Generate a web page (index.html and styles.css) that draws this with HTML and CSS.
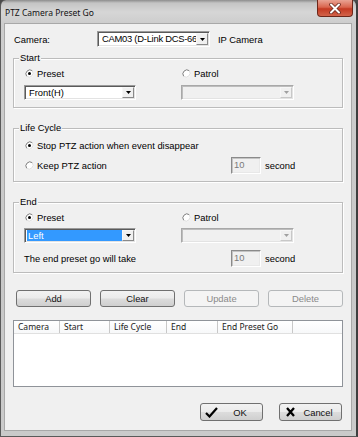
FILE: index.html
```html
<!DOCTYPE html>
<html>
<head>
<meta charset="utf-8">
<title>PTZ Camera Preset Go</title>
<link rel="stylesheet" href="styles.css">
</head>
<body>
<div class="window">
  <div class="titlebar">
    <span class="title">PTZ Camera Preset Go</span>
    <div class="close">
      <svg width="14" height="11" viewBox="0 0 14 11"><path d="M3 1.5 L11 9.5 M11 1.5 L3 9.5" stroke="#6a2a20" stroke-width="3.6" stroke-linecap="round"/><path d="M3 1.5 L11 9.5 M11 1.5 L3 9.5" stroke="#fff" stroke-width="2" stroke-linecap="round"/></svg>
    </div>
  </div>
  <div class="client">
    <div class="camera-row">
      <span class="cam-label">Camera:</span>
      <div class="combo cam-combo">
        <span class="combo-text cam-text">CAM03 (D-Link DCS-66</span>
        <span class="drop"><svg width="5" height="3" viewBox="0 0 5 3"><polygon points="0,0 5,0 2.5,3" fill="#000"/></svg></span>
      </div>
      <span class="cam-type">IP Camera</span>
    </div>

    <div class="group g-start">
      <span class="legend">Start</span>
      <div class="gcols">
        <div class="radio-row"><svg class="radio" width="9" height="9" viewBox="0 0 9 9"><circle cx="4.5" cy="4.5" r="4" fill="#fff"/><path d="M1.7 7.3 A4 4 0 0 1 7.3 1.7" fill="none" stroke="#7a7a7a" stroke-width="1"/><path d="M7.3 1.7 A4 4 0 0 1 1.7 7.3" fill="none" stroke="#dcdcdc" stroke-width="1"/><circle cx="4.5" cy="4.5" r="1.5" fill="#000"/></svg><span>Preset</span></div>
        <div class="radio-row"><svg class="radio" width="9" height="9" viewBox="0 0 9 9"><circle cx="4.5" cy="4.5" r="4" fill="#fff"/><path d="M1.7 7.3 A4 4 0 0 1 7.3 1.7" fill="none" stroke="#7a7a7a" stroke-width="1"/><path d="M7.3 1.7 A4 4 0 0 1 1.7 7.3" fill="none" stroke="#dcdcdc" stroke-width="1"/></svg><span>Patrol</span></div>
        <div class="combo w112">
          <span class="combo-text">Front(H)</span>
          <span class="drop"><svg width="5" height="3" viewBox="0 0 5 3"><polygon points="0,0 5,0 2.5,3" fill="#000"/></svg></span>
        </div>
        <div class="combo disabled w113">
          <span class="combo-text"></span>
          <span class="drop"><svg width="5" height="3" viewBox="0 0 5 3"><polygon points="0,0 5,0 2.5,3" fill="#a0a0a0"/></svg></span>
        </div>
      </div>
    </div>

    <div class="group g-life">
      <span class="legend">Life Cycle</span>
      <div class="radio-row"><svg class="radio" width="9" height="9" viewBox="0 0 9 9"><circle cx="4.5" cy="4.5" r="4" fill="#fff"/><path d="M1.7 7.3 A4 4 0 0 1 7.3 1.7" fill="none" stroke="#7a7a7a" stroke-width="1"/><path d="M7.3 1.7 A4 4 0 0 1 1.7 7.3" fill="none" stroke="#dcdcdc" stroke-width="1"/><circle cx="4.5" cy="4.5" r="1.5" fill="#000"/></svg><span>Stop PTZ action when event disappear</span></div>
      <div class="tb-row">
        <div class="radio-row"><svg class="radio" width="9" height="9" viewBox="0 0 9 9"><circle cx="4.5" cy="4.5" r="4" fill="#fff"/><path d="M1.7 7.3 A4 4 0 0 1 7.3 1.7" fill="none" stroke="#7a7a7a" stroke-width="1"/><path d="M7.3 1.7 A4 4 0 0 1 1.7 7.3" fill="none" stroke="#dcdcdc" stroke-width="1"/></svg><span>Keep PTZ action</span></div>
        <div class="tbox">10</div>
        <span class="unit">second</span>
      </div>
    </div>

    <div class="group g-end">
      <span class="legend">End</span>
      <div class="gcols end-cols">
        <div class="radio-row"><svg class="radio" width="9" height="9" viewBox="0 0 9 9"><circle cx="4.5" cy="4.5" r="4" fill="#fff"/><path d="M1.7 7.3 A4 4 0 0 1 7.3 1.7" fill="none" stroke="#7a7a7a" stroke-width="1"/><path d="M7.3 1.7 A4 4 0 0 1 1.7 7.3" fill="none" stroke="#dcdcdc" stroke-width="1"/><circle cx="4.5" cy="4.5" r="1.5" fill="#000"/></svg><span>Preset</span></div>
        <div class="radio-row"><svg class="radio" width="9" height="9" viewBox="0 0 9 9"><circle cx="4.5" cy="4.5" r="4" fill="#fff"/><path d="M1.7 7.3 A4 4 0 0 1 7.3 1.7" fill="none" stroke="#7a7a7a" stroke-width="1"/><path d="M7.3 1.7 A4 4 0 0 1 1.7 7.3" fill="none" stroke="#dcdcdc" stroke-width="1"/></svg><span>Patrol</span></div>
        <div class="combo focused w112">
          <span class="combo-text selected">Left</span>
          <span class="drop"><svg width="5" height="3" viewBox="0 0 5 3"><polygon points="0,0 5,0 2.5,3" fill="#000"/></svg></span>
        </div>
        <div class="combo disabled w113">
          <span class="combo-text"></span>
          <span class="drop"><svg width="5" height="3" viewBox="0 0 5 3"><polygon points="0,0 5,0 2.5,3" fill="#a0a0a0"/></svg></span>
        </div>
        <div class="tb-row span-all">
          <span>The end preset go will take</span>
          <div class="tbox">10</div>
          <span class="unit">second</span>
        </div>
      </div>
    </div>

    <div class="btn-row">
      <div class="btn">Add</div>
      <div class="btn">Clear</div>
      <div class="btn disabled">Update</div>
      <div class="btn disabled">Delete</div>
    </div>

    <div class="list">
      <div class="list-head">
        <span class="hcell c1">Camera</span>
        <span class="hcell c2">Start</span>
        <span class="hcell c3">Life Cycle</span>
        <span class="hcell c4">End</span>
        <span class="hcell c5">End Preset Go</span>
      </div>
    </div>

    <div class="footer">
      <div class="btn btn-icon ok">
        <svg width="13" height="11" viewBox="0 0 13 11"><path d="M1 6 L4.5 9.5 L12 1" fill="none" stroke="#000" stroke-width="2.2" stroke-linejoin="miter"/></svg>
        <span class="btn-label">OK</span>
      </div>
      <div class="btn btn-icon cancel">
        <svg width="9" height="10" viewBox="0 0 9 10"><path d="M1 1 L8 9 M8 1 L1 9" fill="none" stroke="#000" stroke-width="2.3"/></svg>
        <span class="btn-label">Cancel</span>
      </div>
    </div>
  </div>
</div>
</body>
</html>
```

FILE: styles.css
```css
* { box-sizing: border-box; }
html, body { margin: 0; padding: 0; }
body {
  width: 358px;
  height: 437px;
  overflow: hidden;
  background: #4a4a4a;
  font-family: "Liberation Sans", Arial, sans-serif;
  font-size: 9.4px;
  color: #000;
}

.window {
  width: 358px;
  height: 437px;
  display: flex;
  flex-direction: column;
  padding: 0 4px 5px 3px;
  border-left: 1px solid #5a5a5a;
  border-right: 2px solid #3e3e3e;
  border-bottom: 1px solid #5a5a5a;
  border-radius: 6px 6px 0 0;
  background: linear-gradient(180deg, #8c8c8c 0, #c4c4c4 3px, #d6d6d6 12px, #cdcdcd 23px, #c8c8c8 60%, #cacaca 100%);
}

.titlebar {
  height: 23px;
  flex: none;
  display: flex;
  align-items: flex-start;
}
.title {
  font-family: "Noto Sans", "Open Sans", sans-serif;
  font-size: 8.5px;
  line-height: 12px;
  margin: 7px 0 0 1px;
  color: #111;
}
.close {
  margin-left: auto;
  margin-right: -1px;
  width: 36px;
  height: 17px;
  display: flex;
  align-items: center;
  justify-content: center;
  border: 1px solid #6d2619;
  border-top: none;
  border-radius: 0 0 4px 4px;
  background: linear-gradient(180deg, #e9a393 0, #d9654e 45%, #c43a22 55%, #d2634a 100%);
}

.client {
  flex: 1;
  background: #f0f0f0;
  border: 1px solid #a8a8a8;
  padding: 0 8px;
  display: flex;
  flex-direction: column;
}

.camera-row {
  display: flex;
  align-items: center;
  height: 16px;
  margin-top: 7px;
}
.cam-label { width: 84px; padding-left: 1px; }
.cam-combo { width: 113px; height: 16px !important; }
.cam-text { letter-spacing: -0.25px; padding-left: 1px; }
.cam-type { margin-left: 8px; }

.combo {
  display: flex;
  height: 15px;
  background: #fff;
  border: 1px solid;
  border-color: #9a9a9a #ffffff #ffffff #9a9a9a;
  box-shadow: inset 1px 1px 0 #5a5a5a, inset -1px -1px 0 #e3e3e3;
  padding: 1px;
}
.combo-text {
  flex: 1;
  padding-left: 2px;
  overflow: hidden;
  white-space: nowrap;
  line-height: 11px;
  margin-left: 1px;
}
.combo-text.selected {
  background: #3399ff;
  color: #fff;
  padding-left: 1px;
}
.drop {
  width: 12px;
  flex: none;
  display: flex;
  align-items: center;
  justify-content: center;
  background: #f0f0f0;
  border: 1px solid;
  border-color: #f7f7f7 #8a8a8a #8a8a8a #f7f7f7;
}
.combo.disabled {
  background: #f0f0f0;
  border-color: #a8a8a8 #ffffff #ffffff #a8a8a8;
  box-shadow: inset 1px 1px 0 #bdbdbd, inset -1px -1px 0 #e3e3e3;
}
.combo.disabled .drop {
  border-color: #f7f7f7 #c8c8c8 #c8c8c8 #f7f7f7;
}
.w112 { width: 112px; }
.w113 { width: 113px; }

.group {
  position: relative;
  border: 1px solid #bcbcbc;
  box-shadow: inset 1px 1px 0 #fff, 1px 1px 0 #fff;
  flex: none;
}
.legend {
  position: absolute;
  top: -7px;
  left: 5px;
  padding: 0 1px;
  line-height: 11px;
  background: #f0f0f0;
}

.g-start { margin-top: 11px; padding: 8px 0 7px 10px; }
.g-life {
  margin-top: 20px;
  padding: 10px 0 7px 10px;
  display: flex;
  flex-direction: column;
  gap: 5px;
}
.g-end { margin-top: 20px; padding: 8px 0 5px 10px; }

.gcols {
  display: grid;
  grid-template-columns: 157px 113px;
  row-gap: 5px;
}
.end-cols { row-gap: 4px; }
.span-all { grid-column: 1 / -1; margin-top: 3px; }

.radio-row {
  display: flex;
  align-items: center;
  height: 13px;
  gap: 3px;
  padding-left: 1px;
  white-space: nowrap;
}
.radio { flex: none; }

.tb-row {
  display: grid;
  grid-template-columns: 207px 30px auto;
  align-items: center;
  height: 17px;
}
.tb-row .radio-row { height: 17px; }
.tbox {
  height: 17px;
  width: 30px;
  border: 1px solid;
  border-color: #8a8a8a #ffffff #ffffff #8a8a8a;
  box-shadow: inset 1px 1px 0 #c4c4c4, inset -1px -1px 0 #e8e8e8;
  background: #f0f0f0;
  color: #7a7a7a;
  padding-left: 2px;
  line-height: 14px;
}
.unit { padding-left: 4px; }

.btn-row {
  margin-top: 17px;
  display: flex;
  justify-content: space-between;
  padding-left: 3px;
  height: 17px;
  flex: none;
}
.btn {
  width: 75px;
  height: 17px;
  border: 1px solid #707070;
  border-radius: 3px;
  background: linear-gradient(180deg, #f2f2f2 0, #ebebeb 48%, #dcdcdc 52%, #cfcfcf 100%);
  display: flex;
  align-items: center;
  justify-content: center;
  color: #111;
}
.btn.disabled {
  border-color: #b5b8ba;
  background: #f4f4f4;
  color: #8a8a8a;
}

.list {
  margin-top: 13px;
  height: 67px;
  flex: none;
  border: 1px solid #8f9399;
  background: #fff;
}
.list-head {
  display: flex;
  height: 13px;
  border-bottom: 1px solid #e0e0e0;
  background: linear-gradient(180deg, #ffffff 0, #f7f8f9 100%);
  font-family: "Noto Sans", "Open Sans", sans-serif;
  font-size: 8.5px;
  line-height: 12px;
  color: #1a1a1a;
}
.hcell {
  border-right: 1px solid #c8c8c8;
  padding-left: 4px;
  white-space: nowrap;
  overflow: hidden;
}
.c1 { width: 46px; }
.c2 { width: 50px; }
.c3 { width: 57px; }
.c4 { width: 51px; }
.c5 { width: 75px; }

.footer {
  margin-top: 16px;
  display: flex;
  justify-content: flex-end;
  gap: 16px;
  padding-right: 1px;
  flex: none;
}
.btn-icon {
  width: 63px;
  height: 18px;
  justify-content: flex-start;
}
.btn-icon svg { flex: none; }
.ok { padding-left: 4px; }
.cancel { padding-left: 6px; }
.btn-label { flex: 1; text-align: center; }
```
